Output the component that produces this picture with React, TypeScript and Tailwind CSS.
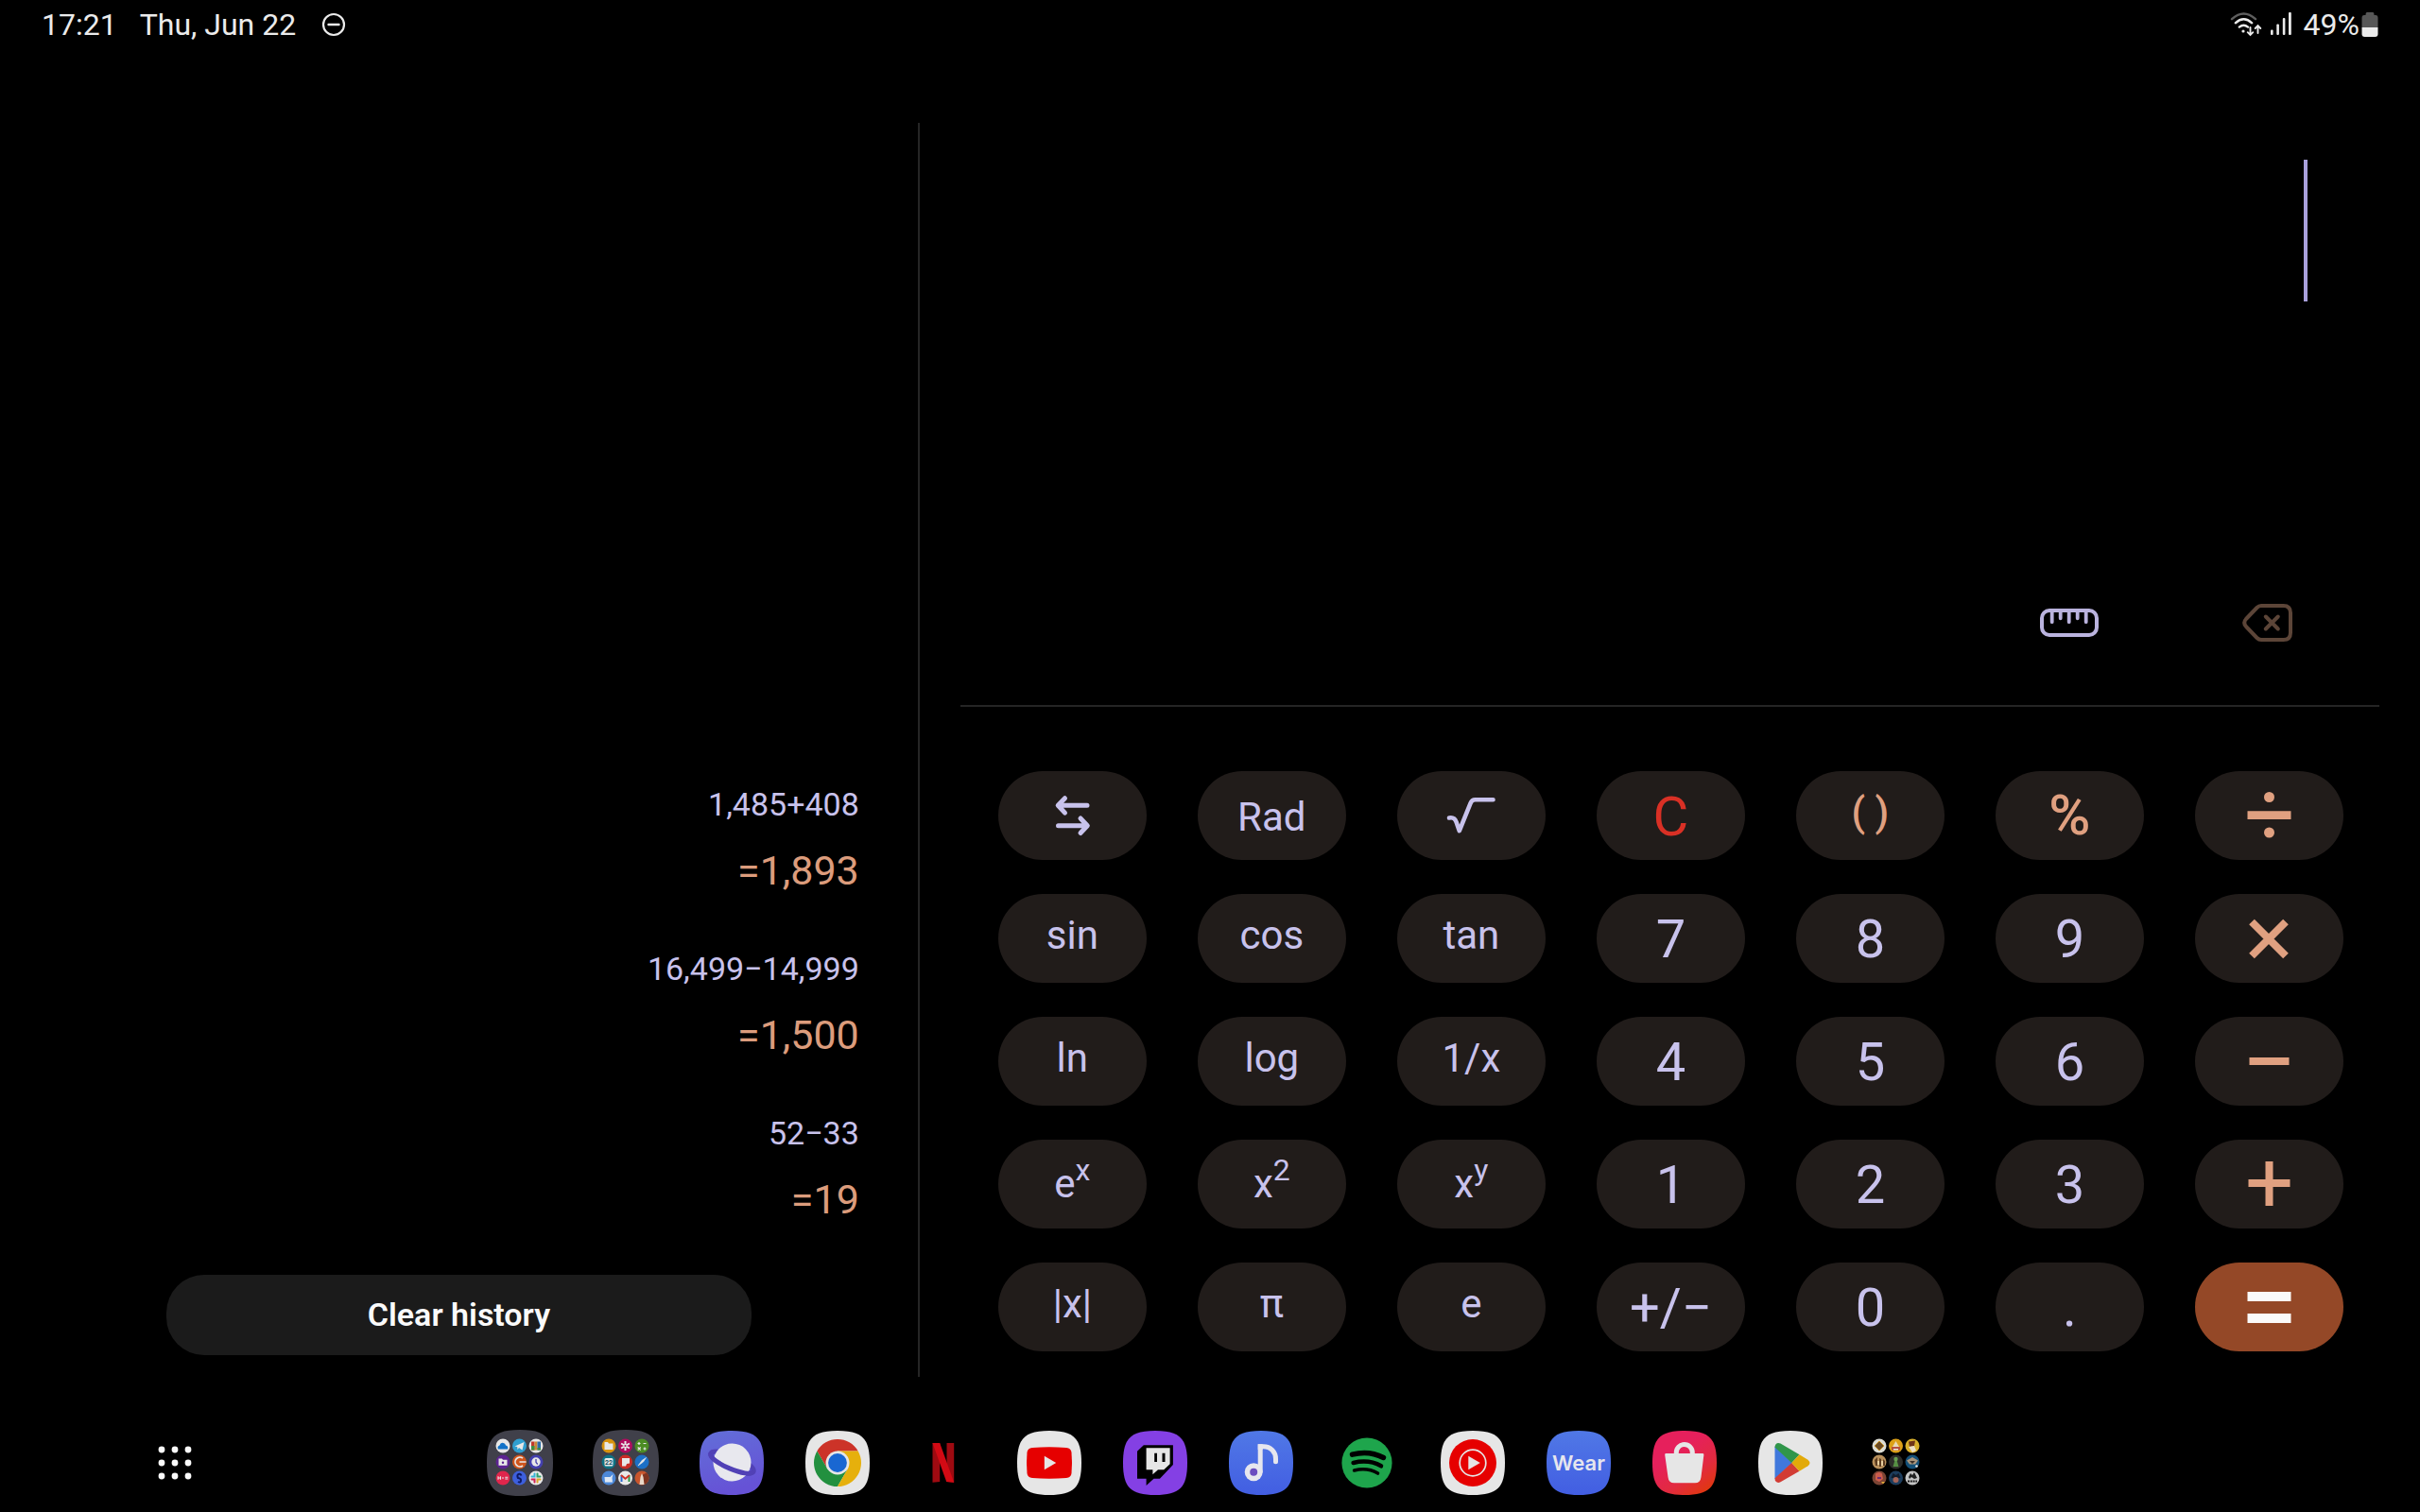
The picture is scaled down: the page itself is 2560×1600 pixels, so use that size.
import type { ReactNode } from "react";

interface HistoryEntry {
  expression: string;
  result: string;
}

interface Key {
  name: string;
  face: ReactNode;
  className: string;
}

const HISTORY: HistoryEntry[] = [
  { expression: "1,485+408", result: "=1,893" },
  { expression: "16,499−14,999", result: "=1,500" },
  { expression: "52−33", result: "=19" },
];

const FN = "bg-[#211c1a] pb-1.5 text-[42px] text-[#c8c2ec]";
const POW = "bg-[#211c1a] text-[42px] text-[#c8c2ec]";
const NUM = "bg-[#211c1a] pt-0.5 text-[56px] text-[#c8c2ec]";
const OP = "bg-[#211c1a] text-[60px] font-medium text-[#e0a080]";
const EQ = "bg-[#944827] text-[#fafafa]";

function Sup({ base, exp }: { base: string; exp: string }) {
  return (
    <span className="flex items-start">
      <span>{base}</span>
      <span className="-mt-2.5 text-[32px]">{exp}</span>
    </span>
  );
}

function OpIcon({ children }: { children: ReactNode }) {
  return (
    <svg viewBox="0 0 64 64" className="size-16" fill="currentColor" aria-hidden="true">
      {children}
    </svg>
  );
}

function SwapIcon() {
  return (
    <svg
      viewBox="0 0 48 48"
      className="size-12"
      fill="none"
      stroke="currentColor"
      strokeWidth="5"
      strokeLinecap="round"
      strokeLinejoin="round"
      aria-hidden="true"
    >
      <path d="M40 13.3H9.5M16.5 5.7L9.2 13.3l7.3 7.8" />
      <path d="M9.5 34.7H40M33 27l7.3 7.7L33 42.5" />
    </svg>
  );
}

function RootIcon() {
  return (
    <svg
      viewBox="0 0 56 56"
      className="size-14"
      fill="none"
      stroke="currentColor"
      strokeWidth="4.6"
      strokeLinecap="round"
      strokeLinejoin="round"
      aria-hidden="true"
    >
      <path d="M5 30.5c4.5-.8 6.2.5 7.6 4.5l3.2 9.2L27.5 15.2q1.5-3.9 5-3.9H51.5" />
    </svg>
  );
}

const KEYS: Key[] = [
  { name: "Swap keys", face: <SwapIcon />, className: POW },
  { name: "Radians", face: "Rad", className: "bg-[#211c1a] pt-1 text-[42px] text-[#c8c2ec]" },
  { name: "Square root", face: <RootIcon />, className: POW },
  { name: "Clear", face: "C", className: "bg-[#211c1a] pt-0.5 text-[58px] text-[#d93025]" },
  { name: "Parentheses", face: "( )", className: "bg-[#211c1a] pb-1.5 text-[42px] font-medium text-[#e0a080]" },
  { name: "Percent", face: "%", className: OP },
  {
    name: "Divide",
    face: (
      <OpIcon>
        <path d="M9.5 27.2h46V36h-46z" />
        <circle cx="32.5" cy="12.5" r="5.5" />
        <circle cx="32.5" cy="50" r="5.5" />
      </OpIcon>
    ),
    className: OP,
  },
  { name: "Sine", face: "sin", className: FN },
  { name: "Cosine", face: "cos", className: FN },
  { name: "Tangent", face: "tan", className: FN },
  { name: "7", face: "7", className: NUM },
  { name: "8", face: "8", className: NUM },
  { name: "9", face: "9", className: NUM },
  {
    name: "Multiply",
    face: (
      <OpIcon>
        <path d="M14 14.5l36 36M50 14.5l-36 36" stroke="currentColor" strokeWidth="8" />
      </OpIcon>
    ),
    className: OP,
  },
  { name: "Natural logarithm", face: "ln", className: FN },
  { name: "Logarithm", face: "log", className: FN },
  { name: "Reciprocal", face: "1/x", className: FN },
  { name: "4", face: "4", className: NUM },
  { name: "5", face: "5", className: NUM },
  { name: "6", face: "6", className: NUM },
  {
    name: "Subtract",
    face: (
      <OpIcon>
        <path d="M11.5 28h42v8h-42z" />
      </OpIcon>
    ),
    className: OP,
  },
  { name: "e to the power x", face: <Sup base="e" exp="x" />, className: POW },
  { name: "x squared", face: <Sup base="x" exp="2" />, className: POW },
  { name: "x to the power y", face: <Sup base="x" exp="y" />, className: POW },
  { name: "1", face: "1", className: NUM },
  { name: "2", face: "2", className: NUM },
  { name: "3", face: "3", className: NUM },
  {
    name: "Add",
    face: (
      <OpIcon>
        <path d="M10.500 27h44v8h-44z" />
        <path d="M28.500 8h8v47h-8z" />
      </OpIcon>
    ),
    className: OP,
  },
  { name: "Absolute value", face: "|x|", className: FN },
  { name: "Pi", face: "π", className: FN },
  { name: "Euler's number", face: "e", className: FN },
  { name: "Plus or minus", face: "+/−", className: NUM },
  { name: "0", face: "0", className: NUM },
  { name: "Decimal point", face: ".", className: NUM },
  {
    name: "Equals",
    face: (
      <OpIcon>
        <path d="M9.5 16h46v10h-46zM9.5 39h46v10h-46z" />
      </OpIcon>
    ),
    className: EQ,
  },
];

function StatusBar() {
  return (
    <header className="flex h-[52px] items-center justify-between px-11 text-[32px] text-[#ebebeb]">
      <div className="flex items-center">
        <time>17:21</time>
        <span className="ml-6">Thu, Jun 22</span>
        <svg viewBox="0 0 26 26" className="ml-[27px] size-[26px]" fill="none" stroke="currentColor" aria-label="Do not disturb">
          <circle cx="13" cy="13" r="11" strokeWidth="2.2" />
          <path d="M7.5 13h11" strokeWidth="2.4" strokeLinecap="round" />
        </svg>
      </div>
      <div className="flex items-center">
        <svg viewBox="0 0 34 28" className="h-7 w-[34px]" fill="none" stroke="currentColor" strokeLinecap="round" aria-label="Wi-Fi">
          <path d="M2 8.2Q14.5-3.4 27 8.2" strokeWidth="2.4" opacity=".4" />
          <path d="M5.8 12.3Q14.5 4.3 23.2 12.3" strokeWidth="2.4" />
          <path d="M9.8 16.6Q14.5 12.7 19 16.6" strokeWidth="2.4" />
          <circle cx="14" cy="21" r="1.6" fill="currentColor" stroke="none" />
          <path d="M21.5 17v7.5M18.700 22.200l2.800 2.800 2.800-2.800M29.500 23v-7.500M26.700 18l2.800-2.800L32.300 18" strokeWidth="1.9" />
        </svg>
        <svg viewBox="0 0 24 28" className="ml-2 h-7 w-6" fill="currentColor" aria-label="Mobile signal">
          <rect x="1" y="19.5" width="2.6" height="5.5" rx="1" />
          <rect x="7.3" y="13.5" width="2.6" height="11.5" rx="1" />
          <rect x="13.8" y="7" width="2.6" height="18" rx="1" />
          <rect x="20" y="1" width="2.8" height="24" rx="1" />
        </svg>
        <span className="ml-3">49%</span>
        <svg viewBox="0 0 18 26" className="ml-0.5 h-[26px] w-[18px]" aria-label="Battery">
          <path d="M6 0h6q1.500 0 1.500 3H15q2.500 0 2.500 3v10H.5V6q0-3 2.500-3h1.500Q4.500 0 6 0z" fill="#575757" />
          <path d="M.5 16h17v7q0 3-3 3h-11q-3 0-3-3z" fill="#ebebeb" />
        </svg>
      </div>
    </header>
  );
}

function History() {
  return (
    <aside className="flex w-[38%] shrink-0 flex-col justify-end border-r-2 border-[#252525] pb-[23px]">
      <ul className="flex flex-col gap-[34px] pr-[62px] text-right">
        {HISTORY.map((entry) => (
          <li key={entry.expression}>
            <p className="text-[34px] leading-[60px] text-[#c8c2ec]">{entry.expression}</p>
            <p className="text-[43px] leading-[80px] text-[#dc9c7c]">{entry.result}</p>
          </li>
        ))}
      </ul>
      <button
        type="button"
        className="mx-44 mt-10 h-[85px] rounded-[40px] bg-[#1b1b1b] text-[34px] font-semibold text-[#fafafa]"
      >
        Clear history
      </button>
    </aside>
  );
}

function Display() {
  return (
    <div className="flex flex-1 flex-col justify-between border-b-2 border-[#252525] pb-[67px] pt-[39px]">
      <div className="flex pr-[76px]">
        <input
          type="text"
          aria-label="Expression"
          className="min-w-0 flex-1 bg-transparent text-right text-[128px] text-[#c8c2ec] outline-none"
        />
        <span className="h-[150px] w-1 bg-[#a9a0dc]" />
      </div>
      <div className="flex items-center justify-end gap-[152px] pr-[92px]">
        <button type="button" aria-label="Unit converter">
          <svg viewBox="0 0 62 30" className="h-[30px] w-[62px]" fill="none" stroke="#bab3de" strokeLinecap="round">
            <rect x="2" y="2" width="58" height="26" rx="8" strokeWidth="4" />
            <path d="M12.7 3v11.2M21.7 3v7.3M30.7 3v11.2M39.7 3v7.3M48.7 3v11.2" strokeWidth="3.8" />
          </svg>
        </button>
        <button type="button" aria-label="Backspace">
          <svg
            viewBox="0 0 53 40"
            className="h-10 w-[53px]"
            fill="none"
            stroke="#5c4538"
            strokeWidth="4"
            strokeLinecap="round"
            strokeLinejoin="round"
          >
            <path d="M20 2H43.5q7.5 0 7.5 7.5v21q0 7.5-7.5 7.5H20q-2.5 0-4.5-2L4 24q-3.6-4 0-8L15.5 4q2-2 4.5-2z" />
            <path d="M24.8 13.5l13 13M37.8 13.5l-13 13" />
          </svg>
        </button>
      </div>
    </div>
  );
}

function Keypad() {
  return (
    <div className="grid grid-cols-7 gap-x-[54px] gap-y-9 pb-[27px] pl-10 pr-[38px] pt-[68px]">
      {KEYS.map((key) => (
        <button
          key={key.name}
          type="button"
          aria-label={key.name}
          className={`flex h-[94px] items-center justify-center rounded-full leading-none ${key.className}`}
        >
          {key.face}
        </button>
      ))}
    </div>
  );
}

function Squircle({ fill }: { fill: string }) {
  return <path d="M34 0C60 0 68 8 68 34S60 68 34 68 0 60 0 34 8 0 34 0z" fill={fill} />;
}

function Tile({ children }: { children: ReactNode }) {
  return (
    <svg viewBox="0 0 68 68" className="size-[68px]" aria-hidden="true">
      {children}
    </svg>
  );
}

interface MiniIcon {
  bg: string;
  art: ReactNode;
}

// Art is drawn round 0,0 inside a disc of radius 7.5
function Folder({ minis, bg }: { minis: MiniIcon[]; bg?: string }) {
  return (
    <svg viewBox="0 0 70 70" className="size-[70px]" aria-hidden="true">
      {bg && <path d="M35 0C62 0 70 8 70 35S62 70 35 70 0 62 0 35 8 0 35 0z" fill={bg} />}
      {minis.map((mini, i) => (
        <g key={i} transform={`translate(${17 + (i % 3) * 17.5} ${17 + Math.floor(i / 3) * 17})`}>
          <circle r="7.5" fill={mini.bg} />
          {mini.art}
        </g>
      ))}
    </svg>
  );
}

const APPS_ONE: MiniIcon[] = [
  { bg: "#e8e8e8", art: <path d="M-5 3.5q-1.5-3 1.5-4 1-3.5 4-2.5 2 0 2.5 2.500 3 .5 2 4z" fill="#1272c8" /> },
  { bg: "#2f9ed0", art: <path d="M-5 .5L5-4 3 4.500-.5 2-2 4-2.300 1z" fill="#e8e8e8" /> },
  {
    bg: "#e8e8e8",
    art: (
      <>
        <path d="M-5-4.500h3.500v9H-5z" fill="#c0392b" />
        <path d="M-1.500-4.500h3v9h-3z" fill="#c98a3a" />
        <path d="M1.500-4.500H5v9H1.500z" fill="#2e6da8" />
        <path d="M-5 0h3.500v4.500H-5zM1.500 2H5v2.500H1.500z" fill="#3e8e41" />
      </>
    ),
  },
  {
    bg: "#5c2391",
    art: (
      <>
        <path d="M-4.500-3.500h3.500l1 1.300h4.500v6h-9z" fill="#e8e8e8" />
        <circle cy=".8" r="1.2" fill="#5c2391" />
      </>
    ),
  },
  { bg: "#d0551c", art: <path d="M3.5-4A5 5 0 1 0 3.5 4M0 0h7" stroke="#e8e8e8" strokeWidth="1.7" fill="none" /> },
  {
    bg: "#4440ae",
    art: (
      <>
        <circle r="4.7" fill="#e8e8e8" />
        <path d="M0-3V.3L1.7 2.5" stroke="#4440ae" strokeWidth="1.3" fill="none" />
      </>
    ),
  },
  { bg: "#e0264c", art: <path d="M-5-1.8v3.6M-2.5-1.8v3.6M-5 0h2.500M-1 0h2M2.300-.8h3M2.300 1h3" stroke="#e8e8e8" strokeWidth="1.1" /> },
  { bg: "#3d5fdc", art: <path d="M2-2.5Q1-5-1-4T-1.500 0Q2 .5 1.500 3T-1.500 4" stroke="#0d1a66" strokeWidth="2" fill="none" /> },
  {
    bg: "#e8e8e8",
    art: (
      <g strokeWidth="2" strokeLinecap="round">
        <path d="M-1.5-4.5v3h-3" stroke="#36b4d8" fill="none" />
        <path d="M1.5-4.5v3h3" stroke="#2fa06c" fill="none" />
        <path d="M1.5 4.5v-3h3" stroke="#dca62a" fill="none" />
        <path d="M-1.5 4.5v-3h-3" stroke="#d02458" fill="none" />
      </g>
    ),
  },
];

const APPS_TWO: MiniIcon[] = [
  { bg: "#d8930f", art: <path d="M-4.5-4H-1l1 1.5h4.5v6.5h-9z" fill="#e8e8e8" /> },
  {
    bg: "#b00c5e",
    art: (
      <>
        <path d="M0-5V5M-4.4-2.5L4.4 2.5M-4.4 2.5L4.4-2.5" stroke="#e8e8e8" strokeWidth="2" />
        <circle r="1.1" fill="#b00c5e" />
      </>
    ),
  },
  {
    bg: "#4c8c24",
    art: <path d="M-4.5-2.5h3M-3-4v3M1.5-2.5h3M-4.3 1.5l3 3M-1.3 1.5l-3 3M1.5 3h3M3 1.5v3" stroke="#e8e8e8" strokeWidth="1.2" />,
  },
  {
    bg: "#0e7284",
    art: (
      <>
        <rect x="-4.5" y="-4" width="9" height="8.5" rx="1.5" fill="#e8e8e8" />
        <text y="3" textAnchor="middle" fontSize="7" fontWeight="700" fill="#0e5260">
          22
        </text>
      </>
    ),
  },
  { bg: "#ca2c26", art: <path d="M-3.5-4h8v5.5l-3 .5-1 2.5h-4z" fill="#e8e8e8" /> },
  { bg: "#1c70c6", art: <path d="M-4 4L0-1.5 4.5-4.5 1.5 0z" fill="#e8e8e8" stroke="#e8e8e8" strokeWidth=".6" /> },
  { bg: "#4c88d8", art: <path d="M-4.5-1h6l3-3-1 4 .5 4.5h-8z" fill="#dfe8f4" /> },
  {
    bg: "#e8e8e8",
    art: (
      <g fill="none" strokeWidth="2">
        <path d="M-4 4v-7" stroke="#2a6ad0" />
        <path d="M4 4v-7" stroke="#2f9a48" />
        <path d="M-4.500-3L0 .8 4.500-3" stroke="#cf3428" />
      </g>
    ),
  },
  {
    bg: "#c8552c",
    art: (
      <>
        <path d="M0 7.400A7.500 7.500 0 0 0 5-5.500L0-3z" fill="#7e3420" />
        <path d="M-2.500 7L-1.500-1 0-5 1.500-1 2.500 7z" fill="#e8d8c8" />
      </>
    ),
  },
];

const GAMES: MiniIcon[] = [
  { bg: "#dcdcd4", art: <path d="M0-5L5 0 0 5-5 0z" fill="#6a4a24" stroke="#c8952c" strokeWidth="1" /> },
  {
    bg: "#dca018",
    art: (
      <>
        <path d="M-3.5 1L0-5 3.5 1z" fill="#e8d8b8" />
        <path d="M-4.5 1h9v3.5h-9z" fill="#b8503c" />
        <path d="M-2.5 3h5v1.5h-5z" fill="#e8e8e8" />
      </>
    ),
  },
  {
    bg: "#d8b02c",
    art: (
      <>
        <path d="M-4-4.500l7-1L2 0l-5 1z" fill="#6e3418" />
        <path d="M-4 1l6-1 2 5-4 2z" fill="#ece0c8" />
      </>
    ),
  },
  {
    bg: "#b8905c",
    art: (
      <>
        <path d="M-5-2l3-3v9h-2zM0-4l2 1v8H0zM4-3l2 2v5H4z" fill="#5c3c20" />
        <path d="M-2-1h2v4h-2zM2-1h2v5H2z" fill="#e8cfa0" />
      </>
    ),
  },
  {
    bg: "#2e2e2a",
    art: (
      <>
        <circle cy="-3" r="2.2" fill="#68a050" />
        <path d="M-1.300-1h2.600L3 5h-6z" fill="#568e44" />
      </>
    ),
  },
  {
    bg: "#145078",
    art: (
      <>
        <path d="M-6-1.500L0-5l6 3.500-3 4h-6z" fill="#a8957c" />
        <path d="M-3-1h6L0 2z" fill="#3c3028" />
        <circle cx="4.500" cy="4.500" r="1.300" fill="#e8e8e8" />
      </>
    ),
  },
  {
    bg: "#7c4434",
    art: (
      <>
        <path d="M-4-4.500q4-3 7 0L4 1l-4 3-4-2z" fill="#cc5c4c" />
        <path d="M-2-1h4v2h-4z" fill="#6c2c70" />
        <path d="M2 4h4l-2 2.500z" fill="#dca838" />
      </>
    ),
  },
  {
    bg: "#1c3c5c",
    art: (
      <>
        <path d="M-5 0l2-5 3 2 3-2 2 5z" fill="#101c2c" />
        <circle cy="2" r="3" fill="#a46458" />
      </>
    ),
  },
  {
    bg: "#c4c4c4",
    art: (
      <>
        <path d="M-4-1l2-4 2 2 2-3 3 6-3 1-3-2-2 2z" fill="#202020" />
        <path d="M-5 3.500H5" stroke="#181818" strokeWidth="2" strokeDasharray="2 .8" />
      </>
    ),
  },
];

const DOCK: { name: string; icon: ReactNode }[] = [
  { name: "Folder one", icon: <Folder minis={APPS_ONE} bg="#40404a" /> },
  { name: "Folder two", icon: <Folder minis={APPS_TWO} bg="#40404a" /> },
  {
    name: "Internet",
    icon: (
      <Tile>
        <defs>
          <linearGradient id="net" x1="0" y1="0" x2="0.3" y2="1">
            <stop offset="0" stopColor="#626fd8" />
            <stop offset="1" stopColor="#6652d6" />
          </linearGradient>
        </defs>
        <Squircle fill="url(#net)" />
        <g transform="translate(34.5 33.5) rotate(23)" fill="none" stroke="#5141b6" strokeWidth="5">
          <ellipse rx="24.5" ry="7" />
          <circle r="20" fill="#e8e8ee" stroke="none" />
          <path d="M-24.5 0C-24.5 9.3 24.5 9.3 24.5 0" />
        </g>
      </Tile>
    ),
  },
  {
    name: "Chrome",
    icon: (
      <Tile>
        <Squircle fill="#e6e6e6" />
        <g transform="translate(34 34)">
          <path d="M-21.65-12.5A25 25 0 0 1 21.65-12.5H0L-10.8 6.25z" fill="#cc3328" />
          <path d="M-21.65-12.5A25 25 0 0 0 0 25L10.8 6.25H-10.8z" fill="#22903f" />
          <path d="M21.65-12.5A25 25 0 0 1 0 25L10.8 6.25 0-12.5z" fill="#e6b00c" />
          <circle r="12.5" fill="#e6e6e6" />
          <circle r="9.9" fill="#1967d2" />
        </g>
      </Tile>
    ),
  },
  {
    name: "Netflix",
    icon: (
      <Tile>
        <path d="M22.5 13h7.7v41l-7.7.7zM37.5 13h7.7v41.7l-7.7-.7z" fill="#9e0a11" />
        <path d="M22.5 13h7.7l15 41.7-8-.7z" fill="#d20a14" />
      </Tile>
    ),
  },
  {
    name: "YouTube",
    icon: (
      <Tile>
        <Squircle fill="#e6e6e6" />
        <path
          d="M16 18Q34 16.6 52 18 57 18.4 57.5 23 58.5 34 57.5 45 57 49.6 52 50 34 51.4 16 50 11 49.6 10.5 45 9.5 34 10.5 23 11 18.4 16 18z"
          fill="#e60000"
        />
        <path d="M28.8 26.8L41.2 34 28.8 41.2z" fill="#e6e6e6" />
      </Tile>
    ),
  },
  {
    name: "Twitch",
    icon: (
      <Tile>
        <Squircle fill="#8440e4" />
        <path d="M15 21.7l6.800-6.400h31.100V36L38.900 50.700h-6.400L24.600 58v-7.300H15z" fill="#000000" />
        <path d="M24.6 18.3h25v17l-6.400 6H37l-5.600 5v-5h-6.800z" fill="#e6e6e6" />
        <path d="M33.2 23.7H36V33h-2.800zM41.5 23.7h3V33h-3z" fill="#000000" />
      </Tile>
    ),
  },
  {
    name: "Music",
    icon: (
      <Tile>
        <defs>
          <linearGradient id="blue" x1="0" y1="0" x2="0" y2="1">
            <stop offset="0" stopColor="#5078e6" />
            <stop offset="1" stopColor="#425ee2" />
          </linearGradient>
        </defs>
        <Squircle fill="url(#blue)" />
        <path
          d="M33.2 43V16.7h3.3c7.7 0 13 5.6 13 13v3"
          fill="none"
          stroke="#e6e6ee"
          strokeWidth="5"
          strokeLinecap="round"
        />
        <circle cx="26.2" cy="43.7" r="9.5" fill="#e6e6ee" />
        <circle cx="26.2" cy="43.7" r="4" fill="#6a4cc0" />
        <path d="M30.7 14.2h5V20h-5z" fill="#e6e6ee" />
      </Tile>
    ),
  },
  {
    name: "Spotify",
    icon: (
      <Tile>
        <circle cx="34" cy="34" r="26.6" fill="#1ea54c" />
        <g fill="none" stroke="#000000" strokeLinecap="round">
          <path d="M18.5 25.2Q36 20.5 51.5 28.5" strokeWidth="5.4" />
          <path d="M19.6 34Q36 30 49 37.3" strokeWidth="4.5" />
          <path d="M20.6 42Q34.5 38.5 45.5 45" strokeWidth="3.6" />
        </g>
      </Tile>
    ),
  },
  {
    name: "YouTube Music",
    icon: (
      <Tile>
        <Squircle fill="#e6e6e6" />
        <circle cx="34" cy="34" r="25" fill="#e60000" />
        <circle cx="34" cy="34" r="13.8" fill="none" stroke="#e6e6e6" strokeWidth="1.7" />
        <path d="M29.3 26.8L41.8 34 29.3 41.2z" fill="#e6e6e6" />
      </Tile>
    ),
  },
  {
    name: "Wear",
    icon: (
      <Tile>
        <Squircle fill="url(#blue)" />
        <text x="34" y="41.5" textAnchor="middle" fontSize="22" fontWeight="600" fill="#e6e6ee" className="font-['Inter',sans-serif]">
          Wear
        </text>
      </Tile>
    ),
  },
  {
    name: "Galaxy Store",
    icon: (
      <Tile>
        <defs>
          <linearGradient id="store" x1="0.4" y1="0.3" x2="0.9" y2="1">
            <stop offset="0" stopColor="#e6205c" />
            <stop offset="0.5" stopColor="#e22a40" />
            <stop offset="1" stopColor="#e03a06" />
          </linearGradient>
        </defs>
        <Squircle fill="url(#store)" />
        <path d="M25.3 26v-3a8.500 8.500 0 0 1 17 0v3" fill="none" stroke="#e6e6e6" strokeWidth="5" />
        <path d="M14.5 24h38.500q1.500 0 1.400 1.500L51.500 49q-.7 6.300-6.500 6.300H23q-5.800 0-6.500-6.300L13.200 25.500Q13 24 14.500 24z" fill="#e6e6e6" />
      </Tile>
    ),
  },
  {
    name: "Play Store",
    icon: (
      <Tile>
        <Squircle fill="#e6e6e6" />
        <path d="M17.5 16.5V51L36 34z" fill="#4078dc" />
        <path d="M17.5 17.5c0-4 3-5.600 6-4L43.500 25.300 35.300 34z" fill="#30964a" />
        <path d="M17.5 50.300c0 4 3 5.600 6 4L43.500 42.700 35.300 34z" fill="#d23c34" />
        <path d="M43.5 25.300l9 5.400q4 3.300 0 6.600l-9 5.400L35.300 34z" fill="#e2aa0a" />
      </Tile>
    ),
  },
  { name: "Games", icon: <Folder minis={GAMES} /> },
];

function Dock() {
  return (
    <nav className="grid grid-cols-[1fr_auto_1fr] items-center pb-[17px] pr-1 pt-14">
      <button type="button" aria-label="All apps" className="ml-[165px] justify-self-start">
        <svg viewBox="0 0 40 40" className="size-10" fill="#fafafa">
          {[6, 20, 34].map((y) => [6, 20, 34].map((x) => <circle key={`${x}-${y}`} cx={x} cy={y} r="3.4" />))}
        </svg>
      </button>
      <ul className="flex gap-[42px]">
        {DOCK.map((app) => (
          <li key={app.name}>
            <button type="button" aria-label={app.name} className="flex size-[70px] items-center justify-center">
              {app.icon}
            </button>
          </li>
        ))}
      </ul>
    </nav>
  );
}

export default function App() {
  return (
    <div className="flex min-h-screen flex-col bg-black font-['Roboto',sans-serif]">
      <StatusBar />
      <main className="flex flex-1 pt-[78px]">
        <History />
        <section className="flex min-w-0 flex-1 flex-col px-[43px]">
          <Display />
          <Keypad />
        </section>
      </main>
      <Dock />
    </div>
  );
}
